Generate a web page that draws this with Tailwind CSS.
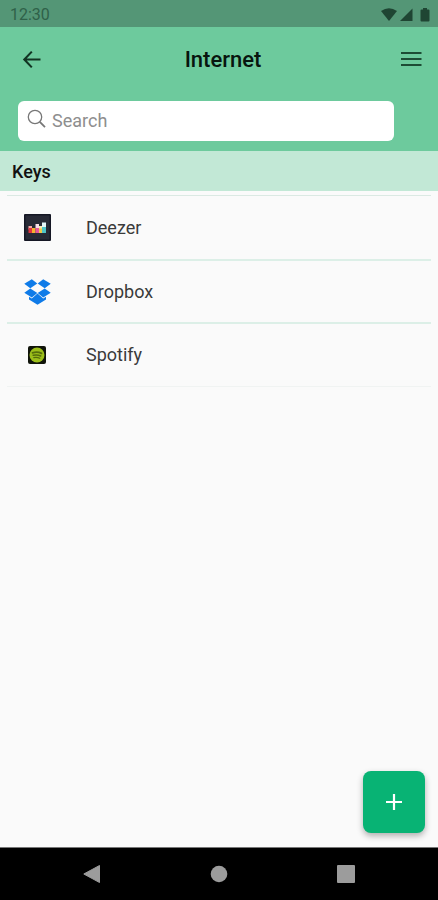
<!DOCTYPE html>
<html lang="en">
<head>
  <meta charset="UTF-8" />
  <title>Internet</title>
  <meta name="viewport" content="width=device-width, initial-scale=1.0" />
  <script src="https://cdn.jsdelivr.net/npm/@tailwindcss/browser@4"></script>
</head>
<body class="flex min-h-screen flex-col bg-[#fafafa] font-['Roboto',sans-serif] text-[#111]">

  <!-- Status bar -->
  <div class="flex h-[27px] items-center justify-between bg-[#549676] pr-2 pl-[10px] pt-[2px] text-[#2f6149]">
    <span class="text-base leading-5">12:30</span>
    <svg class="h-4 w-[50px]" viewBox="0 0 50 16" fill="#1f4533" aria-hidden="true">
      <path d="M1 4 Q9 -1.500 17 4 L9 14 Z" />
      <path d="M32.500 1.500 V14 H20 Z" />
      <path d="M43 1 h4 v1.500 h1.500 q1 0 1 1 v10 q0 1 -1 1 h-7 q-1 0 -1 -1 v-10 q0 -1 1 -1 h1.500 z" />
    </svg>
  </div>

  <!-- Header -->
  <header class="bg-[#6dca9d]">
    <div class="flex h-[65px] items-center justify-between pr-4 pl-[22px]">
      <button type="button" aria-label="Back" class="w-6">
        <svg class="size-5" viewBox="0 0 20 20" fill="none" stroke="#123423" stroke-width="2.1">
          <path d="M9.800 1.600 L2.300 9.500 L9.800 17.400 M2.500 9.500 H18.500" />
        </svg>
      </button>
      <h1 class="text-[22px] leading-7 font-medium text-[#07150e]">Internet</h1>
      <button type="button" aria-label="Menu">
        <svg class="h-5 w-[22px]" viewBox="0 0 22 20" stroke="#1d4c35" stroke-width="2">
          <path d="M1 3 H21.500 M1 9 H21.500 M1 15 H21.500" />
        </svg>
      </button>
    </div>
    <div class="pt-[9px] pr-11 pb-[10px] pl-[18px]">
      <label class="flex h-10 items-center rounded-md bg-white pl-[9px]">
        <svg class="mb-1 h-5 w-[19px] shrink-0" viewBox="0 0 19 20" fill="none" stroke="#777" stroke-width="1.300" aria-hidden="true">
          <circle cx="8" cy="8" r="6.700" />
          <path d="M12.800 12.800 L18 18.200" stroke-width="1.800" />
        </svg>
        <input type="search" aria-label="Search" placeholder="Search" class="ml-[6px] min-w-0 flex-1 text-lg leading-6 outline-none placeholder:text-[#8e8e8e]" />
      </label>
    </div>
  </header>

  <!-- Keys -->
  <main class="flex-1">
    <h2 class="h-10 bg-[#c2e8d6] px-3 text-lg leading-[42px] font-medium">Keys</h2>
    <ul class="mx-[7px] mt-1 divide-y-2 divide-[#dcefe7] border-y border-t-[#dbe9e3] border-b-[#f0f3f2] text-lg leading-6 text-[#3a3a3a]">
      <li>
        <a href="#deezer" class="flex h-[63px] items-center">
          <span class="flex w-[60px] justify-center">
            <svg class="size-[27px]" viewBox="0 0 27 27" aria-hidden="true">
              <rect width="27" height="27" rx="1" fill="#151724" />
              <rect x="1.500" y="1.500" width="24" height="24" fill="#282a36" />
              <path d="M4.500 12 h3.500 v3.500 h-3.500 z" fill="#f3a8a8" />
              <path d="M4.500 14 h3.500 v5 h-3.500 z" fill="#e2333f" />
              <path d="M8 14 h3.500 v5 h-3.500 z" fill="#f5b22e" />
              <path d="M11.500 10 h3.500 v4.500 h-3.500 z" fill="#f9dfe8" />
              <path d="M11.500 14 h3.500 v5 h-3.500 z" fill="#e8559a" />
              <path d="M15 12 h3 v3 h-3 z" fill="#fbe9b0" />
              <path d="M15 14.500 h3 v4.500 h-3 z" fill="#efc94a" />
              <path d="M18 8.500 h4 v5 h-4 z" fill="#e4f6f8" />
              <path d="M18 13 h4 v6 h-4 z" fill="#4fc5c8" />
            </svg>
          </span>
          <span class="ml-[19px]">Deezer</span>
        </a>
      </li>
      <li>
        <a href="#dropbox" class="flex h-[61px] items-center">
          <span class="flex w-[60px] justify-center">
            <svg class="h-[26px] w-[27px]" viewBox="0 0 27 26" fill="#0f7be8" aria-hidden="true">
              <path d="M7.800 0.300 L13.300 4.600 L6.300 9.200 L0.300 4.800 Z" />
              <path d="M19.200 0.300 L26.700 4.800 L20.700 9.200 L13.700 4.600 Z" />
              <path d="M6.300 9.400 L13.300 13.900 L7.800 18.600 L0.300 13.800 Z" />
              <path d="M20.700 9.400 L26.700 13.800 L19.200 18.600 L13.700 13.900 Z" />
              <path d="M13.500 14.600 L19.200 19.400 L22 17.800 V20.500 L13.500 25.800 L5 20.500 V17.800 L7.800 19.400 Z" />
            </svg>
          </span>
          <span class="ml-[19px]">Dropbox</span>
        </a>
      </li>
      <li>
        <a href="#spotify" class="flex h-[62px] items-center">
          <span class="flex w-[60px] justify-center">
            <svg class="size-[18px]" viewBox="0 0 18 18" fill="none" stroke="#566e0b" stroke-linecap="round" aria-hidden="true">
              <rect width="18" height="18" rx="2" fill="#10140a" stroke="none" />
              <circle cx="9" cy="9" r="7.500" fill="#9cbf1a" stroke="none" />
              <path d="M4.500 6.800 Q9.500 5.300 13.500 7.400" stroke-width="1.800" />
              <path d="M5.200 9.300 Q9.300 8.200 12.700 10" stroke-width="1.500" />
              <path d="M5.800 11.600 Q9 10.800 11.800 12.300" stroke-width="1.200" />
            </svg>
          </span>
          <span class="ml-[19px]">Spotify</span>
        </a>
      </li>
    </ul>
  </main>

  <!-- Add button -->
  <button type="button" aria-label="Add key" class="fixed right-[13px] bottom-[67px] flex size-[62px] items-center justify-center rounded-lg bg-[#08b374] shadow-[0_3px_6px_rgba(0,0,0,0.3)]">
    <svg class="size-[18px]" viewBox="0 0 18 18" stroke="#fff" stroke-width="2.200" aria-hidden="true">
      <path d="M9 1 V17 M1 9 H17" />
    </svg>
  </button>

  <!-- System navigation -->
  <nav class="grid h-[53px] grid-cols-3 items-center justify-items-center border-t border-[#777] bg-black px-7">
    <button type="button" aria-label="System back">
      <svg class="size-[18px]" viewBox="0 0 18 18" fill="#9c9c9c"><path d="M16.500 0.500 V17.500 L0.800 9 Z" stroke="#9c9c9c" stroke-linejoin="round" /></svg>
    </button>
    <button type="button" aria-label="Home">
      <svg class="size-[18px]" viewBox="0 0 18 18" fill="#9c9c9c"><circle cx="9" cy="9" r="8.300" /></svg>
    </button>
    <button type="button" aria-label="Recent apps">
      <svg class="size-[18px]" viewBox="0 0 18 18" fill="#9c9c9c"><rect width="18" height="18" rx="1" /></svg>
    </button>
  </nav>

</body>
</html>
